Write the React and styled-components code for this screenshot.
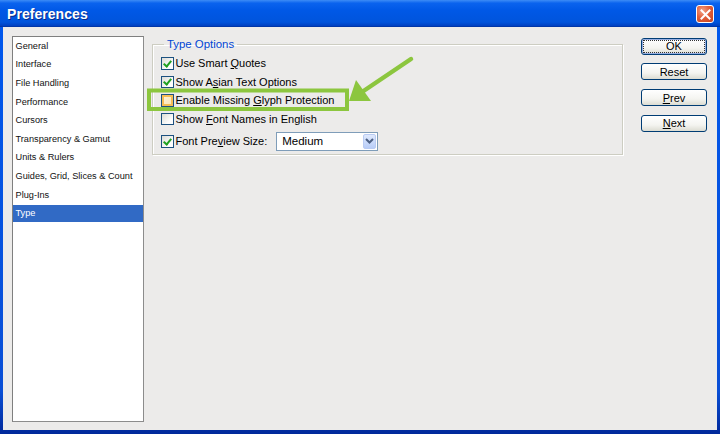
import React from "react";
import styled, { createGlobalStyle } from "styled-components";

const categories = [
  "General",
  "Interface",
  "File Handling",
  "Performance",
  "Cursors",
  "Transparency & Gamut",
  "Units & Rulers",
  "Guides, Grid, Slices & Count",
  "Plug-Ins",
  "Type",
];

const GlobalStyle = createGlobalStyle`
  html, body {
    margin: 0;
    padding: 0;
    background: #0054e3;
  }
  * {
    box-sizing: border-box;
  }
`;

const App = () => {
  return (
    <>
      <GlobalStyle />
      <Window>
        <TitleBar>
          <Title>Preferences</Title>
          <CloseButton aria-label="Close">
            <svg width="11" height="11" viewBox="0 0 11 11">
              <path d="M1.5 1.5 L9.5 9.5 M9.5 1.5 L1.5 9.5" stroke="#fff" strokeWidth="2" strokeLinecap="square" />
            </svg>
          </CloseButton>
        </TitleBar>
        <Body>
          <CategoryList>
            {categories.map((c) => (
              <CategoryItem key={c} $selected={c === "Type"}>
                {c}
              </CategoryItem>
            ))}
          </CategoryList>

          <Group>
            <Legend>Type Options</Legend>
            <OptionRow>
              <CheckBox $checked />
              <Label>
                Use Smart <u>Q</u>uotes
              </Label>
            </OptionRow>
            <OptionRow>
              <CheckBox $checked />
              <Label>
                Show A<u>s</u>ian Text Options
              </Label>
            </OptionRow>
            <OptionRow>
              <CheckBox $hover />
              <Label>
                Enable Missing <u>G</u>lyph Protection
              </Label>
            </OptionRow>
            <OptionRow>
              <CheckBox />
              <Label>
                Show <u>F</u>ont Names in English
              </Label>
            </OptionRow>
            <OptionRow $tall>
              <CheckBox $checked />
              <Label>
                Font Pre<u>v</u>iew Size:
              </Label>
              <Select>
                <span>Medium</span>
                <SelectArrow>
                  <svg width="9" height="6" viewBox="0 0 9 6">
                    <path d="M1 1 L4.5 4.5 L8 1" stroke="#4d6185" strokeWidth="2" fill="none" />
                  </svg>
                </SelectArrow>
              </Select>
            </OptionRow>
          </Group>

          <ButtonColumn>
            <DialogButton $default>
              <FocusRing>OK</FocusRing>
            </DialogButton>
            <DialogButton>Reset</DialogButton>
            <DialogButton>
              <u>P</u>rev
            </DialogButton>
            <DialogButton>
              <u>N</u>ext
            </DialogButton>
          </ButtonColumn>
        </Body>

        <Annotation width="720" height="434" viewBox="0 0 720 434">
          <rect x="149" y="90.5" width="198" height="18.5" fill="none" stroke="#8cc63f" strokeWidth="4" />
          <line x1="411" y1="59" x2="362" y2="92" stroke="#8cc63f" strokeWidth="4.5" strokeLinecap="round" />
          <polygon points="349,101 356,80 371,101" fill="#8cc63f" />
        </Annotation>
      </Window>
    </>
  );
};

const Window = styled.div`
  position: relative;
  width: 720px;
  height: 434px;
  display: flex;
  flex-direction: column;
  background: linear-gradient(to bottom, #0058ee 0%, #0a4fd6 90%, #00289a 100%);
  font-family: "Liberation Sans", Arial, sans-serif;
  overflow: hidden;
`;

const TitleBar = styled.div`
  height: 27px;
  flex: none;
  display: flex;
  align-items: center;
  justify-content: space-between;
  padding: 0 6px 0 7px;
  background: linear-gradient(
    to bottom,
    #3d8cf6 0%,
    #0a63ee 12%,
    #0058e6 40%,
    #0054dc 85%,
    #003fc0 100%
  );
  border-bottom: 1px solid #0036a8;
`;

const Title = styled.span`
  color: #fff;
  font-weight: bold;
  font-size: 14px;
  letter-spacing: 0.05px;
  text-shadow: 1px 1px 0 #0a2c8a;
  margin-top: 1px;
`;

const CloseButton = styled.div`
  width: 18px;
  height: 18px;
  margin-top: 2px;
  display: flex;
  align-items: center;
  justify-content: center;
  border: 1px solid #fff;
  border-radius: 3px;
  background: radial-gradient(circle at 35% 30%, #f2a48a 0%, #e2603b 45%, #c8401c 100%);
`;

const Body = styled.div`
  flex: 1;
  display: flex;
  align-items: flex-start;
  margin: 0 3px 4px 3px;
  padding: 9px 0 8px 9px;
  background: #ecebea;
`;

const CategoryList = styled.div`
  width: 132px;
  height: 386px;
  flex: none;
  display: flex;
  flex-direction: column;
  gap: 1.6px;
  padding-top: 0.4px;
  background: #fff;
  border: 1px solid #7f7f7f;
  border-right-color: #8c8c8c;
  border-bottom-color: #8c8c8c;
`;

const CategoryItem = styled.div`
  height: 17px;
  display: flex;
  align-items: center;
  padding-left: 2.5px;
  font-size: 9.2px;
  color: ${(p) => (p.$selected ? "#fff" : "#111")};
  background: ${(p) => (p.$selected ? "#316ac5" : "transparent")};
  white-space: nowrap;
`;

const Group = styled.fieldset`
  width: 471px;
  margin: 2px 0 0 8px;
  padding: 3px 0 3px 8px;
  border: 1px solid #cdcdc2;
  box-shadow: inset 1px 1px 0 #fff, 1px 1px 0 #fff;
  display: flex;
  flex-direction: column;
`;

const Legend = styled.legend`
  margin-left: 3px;
  padding: 0 3px;
  font-size: 11.4px;
  line-height: 13px;
  color: #0046d5;
`;

const OptionRow = styled.div`
  height: ${(p) => (p.$tall ? "19px" : "18.6px")};
  margin-top: ${(p) => (p.$tall ? "3.4px" : "0")};
  display: flex;
  align-items: center;
`;

const CheckBox = styled.span`
  width: 12.5px;
  height: 12.5px;
  flex: none;
  position: relative;
  border: 1px solid #1c5180;
  background: ${(p) =>
    p.$hover
      ? "linear-gradient(135deg, #fdf3dc, #fbe3b0)"
      : "linear-gradient(135deg, #dcdcd6, #fdfdfd 70%)"};
  box-shadow: ${(p) => (p.$hover ? "inset 0 0 0 2px #f6bd55" : "none")};
  &::after {
    content: "";
    display: ${(p) => (p.$checked ? "block" : "none")};
    position: absolute;
    left: 3px;
    top: 0.5px;
    width: 3px;
    height: 6px;
    border: solid #21a121;
    border-width: 0 2px 2px 0;
    transform: rotate(40deg);
  }
`;

const Label = styled.span`
  margin-left: 2px;
  font-size: 11px;
  color: #000;
  white-space: nowrap;
  u {
    text-underline-offset: 1px;
  }
`;

const Select = styled.div`
  width: 102px;
  height: 19px;
  margin-left: 9px;
  display: flex;
  align-items: center;
  justify-content: space-between;
  padding: 0 1px 0 5px;
  background: #fff;
  border: 1px solid #7f9db9;
  font-size: 11.5px;
  color: #000;
`;

const SelectArrow = styled.span`
  width: 13px;
  height: 15px;
  display: flex;
  align-items: center;
  justify-content: center;
  border: 1px solid #b9cbf3;
  border-radius: 2px;
  background: linear-gradient(to bottom, #dfe9fd, #b8cdf8);
`;

const ButtonColumn = styled.div`
  margin: 1.5px 0 0 18px;
  width: 66px;
  display: flex;
  flex-direction: column;
  gap: 8.8px;
`;

const DialogButton = styled.div`
  height: 17px;
  display: flex;
  align-items: center;
  justify-content: center;
  padding: 1px;
  font-size: 11px;
  color: #000;
  border: 1px solid #003c74;
  border-radius: 3px;
  background: linear-gradient(to bottom, #ffffff 0%, #f4f4f0 60%, #dcdcd2 100%);
  box-shadow: ${(p) => (p.$default ? "inset 0 0 0 1px #97aee2" : "none")};
  u {
    text-underline-offset: 1px;
  }
`;

const FocusRing = styled.span`
  width: 100%;
  height: 100%;
  display: flex;
  align-items: center;
  justify-content: center;
  border: 1px dotted #333;
`;

const Annotation = styled.svg`
  position: absolute;
  left: 0;
  top: 0;
  pointer-events: none;
`;

export default App;
